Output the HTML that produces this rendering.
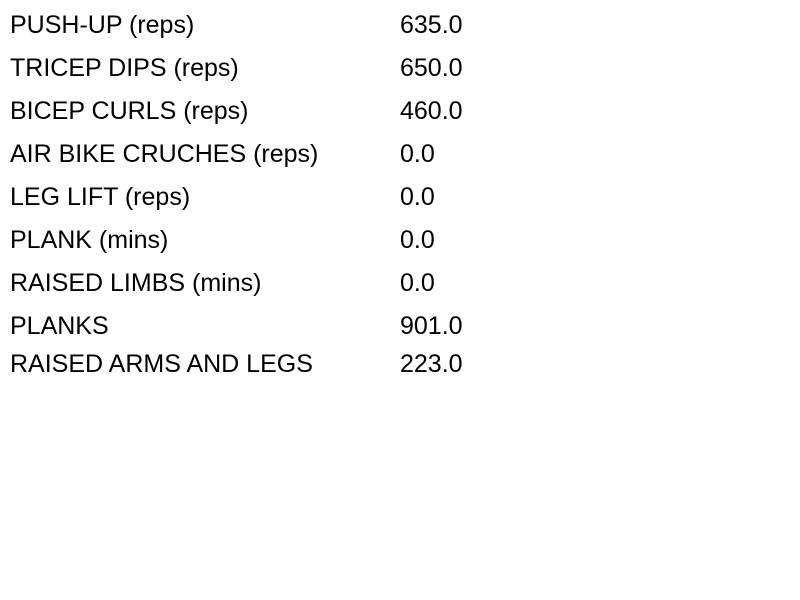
<!DOCTYPE html>
<html><head><style>
body{margin:0;width:800px;height:600px;background:#fff;font-family:"Liberation Sans",sans-serif;font-size:25px;color:#000;position:relative}
div{position:absolute;line-height:30px;height:30px;white-space:nowrap}
.l{left:10px}.v{left:400px}
</style></head><body>
<div class="l" style="top:10px">PUSH-UP (reps)</div><div class="v" style="top:10px">635.0</div>
<div class="l" style="top:53px">TRICEP DIPS (reps)</div><div class="v" style="top:53px">650.0</div>
<div class="l" style="top:96px">BICEP CURLS (reps)</div><div class="v" style="top:96px">460.0</div>
<div class="l" style="top:139px">AIR BIKE CRUCHES (reps)</div><div class="v" style="top:139px">0.0</div>
<div class="l" style="top:182px">LEG LIFT (reps)</div><div class="v" style="top:182px">0.0</div>
<div class="l" style="top:225px">PLANK (mins)</div><div class="v" style="top:225px">0.0</div>
<div class="l" style="top:268px">RAISED LIMBS (mins)</div><div class="v" style="top:268px">0.0</div>
<div class="l" style="top:311px">PLANKS</div><div class="v" style="top:311px">901.0</div>
<div class="l" style="top:349px">RAISED ARMS AND LEGS</div><div class="v" style="top:349px">223.0</div>
</body></html>
